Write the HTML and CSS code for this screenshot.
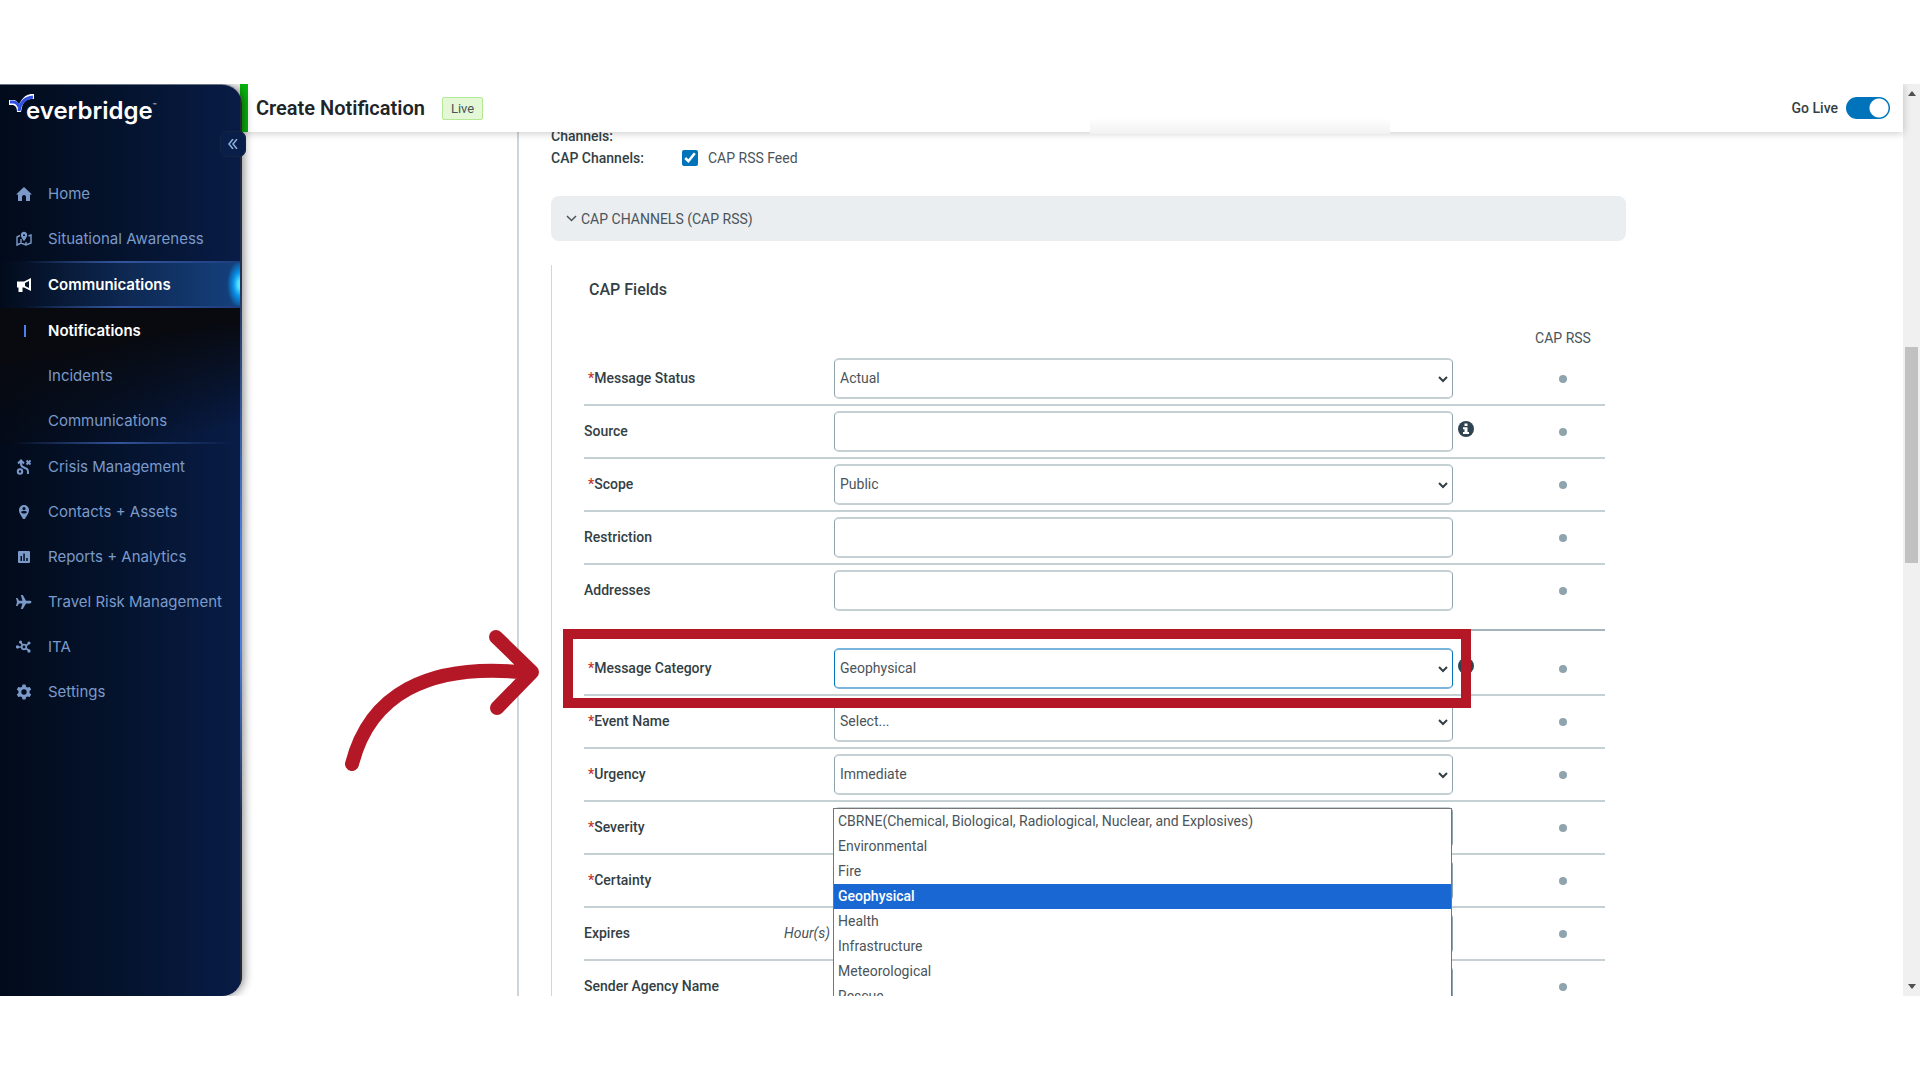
FILE: index.html
```html
<!DOCTYPE html>
<html lang="en">
<head>
<meta charset="utf-8">
<title>Create Notification</title>
<link rel="stylesheet" href="styles.css">
</head>
<body>
<div class="app">
  <aside class="sidebar">
    <div class="brand">
      <svg class="brand-mark" width="26" height="20" viewBox="0 0 26 20" aria-hidden="true">
        <path d="M0 6h4c3 0 5 2 6 5c2-6 6-10 12-11h3v5h-3c-5 0-8 4-9 8l-1 5h-4c0-5-2-7-5-7H0z" fill="#fff"/>
        <path d="M1 8h3c3 0 5 2 6 5" fill="none" stroke="#2f50e0" stroke-width="3"/>
        <path d="M10 17c1-8 5-13 14-14" fill="none" stroke="#2f50e0" stroke-width="3"/>
      </svg>
      <span class="brand-name">everbridge</span><span class="brand-tm">™</span>
    </div>
    <button class="collapse" type="button" aria-label="Collapse menu">
      <svg width="10" height="10" viewBox="0 0 10 10" fill="none" stroke="#8fb0e0" stroke-width="1.5"><path d="M5 0L1 5l4 5M9 0L5 5l4 5"/></svg>
    </button>
    <nav class="nav">
      <a class="nav-item" href="#"><svg width="16" height="16" viewBox="0 0 16 16" fill="currentColor"><path d="M8 1L0 8.500h2V15h4v-4a2 2 0 0 1 4 0v4h4V8.500h2z"/></svg>Home</a>
      <a class="nav-item" href="#"><svg width="16" height="16" viewBox="0 0 16 16" fill="none" stroke="currentColor" stroke-width="1.4"><path d="M4 4.500L1 6v8l4-2 5 2 5-2V4l-2.500 1M5 12V8M10 14v-3"/><path d="M8 1.500a2.500 2.500 0 0 1 2.500 2.500c0 2-2.500 5-2.500 5S5.500 6 5.500 4A2.500 2.500 0 0 1 8 1.500z" fill="currentColor"/><circle cx="8" cy="4.200" r="1" fill="#05122f" stroke="none"/></svg>Situational Awareness</a>
      <a class="nav-item nav-item--active" href="#"><svg width="16" height="16" viewBox="0 0 16 16" fill="currentColor"><path d="M1 4.500h7L15 1v13l-7-3.500H6.500V15h-4v-4.500H1zM13 4L9 6v3l4 2z" fill-rule="evenodd"/></svg>Communications</a>
      <div class="subnav">
        <a class="nav-item nav-item--current" href="#"><i class="marker"></i>Notifications</a>
        <a class="nav-item" href="#"><i></i>Incidents</a>
        <a class="nav-item" href="#"><i></i>Communications</a>
      </div>
      <a class="nav-item" href="#"><svg width="16" height="16" viewBox="0 0 16 16" fill="none" stroke="currentColor" stroke-width="2"><circle cx="4" cy="12.500" r="2.200"/><path d="M5 2v3c0 2 1 3 4 4s3 2 3 6M2 4.500l3-3 3 3M10.500 1.500l4 4M14.500 1.500l-4 4"/></svg>Crisis Management</a>
      <a class="nav-item" href="#"><svg width="16" height="16" viewBox="0 0 16 16" fill="currentColor"><path d="M8 1a5 5 0 0 1 5 5c0 4-3 6-4 9H7C6 12 3 10 3 6a5 5 0 0 1 5-5zm0 2a1.600 1.600 0 1 0 0 3.200A1.600 1.600 0 0 0 8 3zM5 8c1 2 5 2 6 0-1-1.300-5-1.300-6 0z" fill-rule="evenodd"/></svg>Contacts + Assets</a>
      <a class="nav-item" href="#"><svg width="16" height="16" viewBox="0 0 16 16" fill="currentColor"><path d="M3 2h10a1 1 0 0 1 1 1v10a1 1 0 0 1-1 1H3a1 1 0 0 1-1-1V3a1 1 0 0 1 1-1zm1.500 5v5H6V7zM7.300 4.500V12h1.500V4.500zM10.200 9v3h1.500V9z" fill-rule="evenodd"/></svg>Reports + Analytics</a>
      <a class="nav-item" href="#"><svg width="16" height="16" viewBox="0 0 16 16" fill="currentColor"><path d="M0 4h1.500L3 6.700h3.500L4.800 1h2L10 6.700h4a1.400 1.400 0 0 1 0 2.800h-4L6.800 15h-2l1.700-5.500H3L1.500 12H0l1-4z"/></svg>Travel Risk Management</a>
      <a class="nav-item" href="#"><svg width="16" height="16" viewBox="0 0 16 16" fill="none" stroke="currentColor" stroke-width="1.700"><circle cx="8" cy="8" r="2.300"/><path d="M2 8h3.500M6.500 6L4.500 3M10 7l3-3M10 9.500l3 2"/><circle cx="1.500" cy="8" r=".8"/><circle cx="4.500" cy="3" r=".7"/><circle cx="13" cy="4" r=".7"/><circle cx="13" cy="12" r=".8"/></svg>ITA</a>
      <a class="nav-item" href="#"><svg width="16" height="16" viewBox="0 0 16 16" fill="currentColor"><path d="M6.500 0h3l.5 2.300 1.400.8L13.700 2.400l1.500 2.600-1.700 1.600v1.800l1.700 1.600-1.500 2.600-2.300-.7-1.400.8-.5 2.300h-3L6 12.700l-1.400-.8-2.300.7L.8 10l1.700-1.600V6.600L.8 5l1.500-2.600 2.300.7L6 2.300zM8 4.800a2.700 2.700 0 1 0 0 5.400 2.700 2.700 0 0 0 0-5.400z" fill-rule="evenodd" transform="translate(0 .5)"/></svg>Settings</a>
    </nav>
  </aside>

  <main class="main">
    <header class="topbar">
      <h1 class="title">Create Notification</h1>
      <span class="badge">Live</span>
      <label class="go-live">Go Live <input class="switch" type="checkbox" role="switch" checked></label>
      <i class="topbar-shade"></i>
    </header>

    <div class="page">
      <form class="content">
        <div class="channels">
          <span class="channels-label">Channels:</span>
          <span class="channels-label">CAP Channels:</span>
          <label class="check"><input type="checkbox" checked>CAP RSS Feed</label>
        </div>

        <button class="accordion" type="button">
          <svg width="11" height="7" viewBox="0 0 11 7" fill="none" stroke="currentColor" stroke-width="1.500"><path d="M1 1l4.500 4.500L10 1"/></svg>CAP CHANNELS (CAP RSS)
        </button>

        <section class="fields">
          <h2 class="fields-title">CAP Fields</h2>
          <div class="fields-head"><span>CAP RSS</span></div>

          <div class="group">
            <div class="row">
              <label class="label label--required" for="status">Message Status</label>
              <div class="field"><select id="status"><option>Actual</option></select><svg class="caret" viewBox="0 0 10 7"><path d="M1 1l4 4 4-4"/></svg></div>
              <i class="dot"></i>
            </div>
            <div class="row">
              <label class="label" for="source">Source</label>
              <div class="field"><input id="source" type="text"></div>
              <svg class="info" viewBox="0 0 16 16"><circle cx="8" cy="8" r="8" fill="#2f4450"/><path d="M6.500 2.500h3V5h-3zM5 6.300h4.500V11H11v2H5v-2h1.500V8.300H5z" fill="#fff"/></svg>
              <i class="dot"></i>
            </div>
            <div class="row">
              <label class="label label--required" for="scope">Scope</label>
              <div class="field"><select id="scope"><option>Public</option></select><svg class="caret" viewBox="0 0 10 7"><path d="M1 1l4 4 4-4"/></svg></div>
              <i class="dot"></i>
            </div>
            <div class="row">
              <label class="label" for="restriction">Restriction</label>
              <div class="field"><input id="restriction" type="text"></div>
              <i class="dot"></i>
            </div>
            <div class="row">
              <label class="label" for="addresses">Addresses</label>
              <div class="field"><input id="addresses" type="text"></div>
              <i class="dot"></i>
            </div>
          </div>

          <div class="group group--next">
            <div class="row">
              <label class="label label--required" for="category">Message Category</label>
              <div class="field field--open"><select id="category"><option>Geophysical</option></select><svg class="caret" viewBox="0 0 10 7"><path d="M1 1l4 4 4-4"/></svg>
                <ul class="options" role="listbox" aria-label="Message Category">
                  <li role="option">CBRNE(Chemical, Biological, Radiological, Nuclear, and Explosives)</li>
                  <li role="option">Environmental</li>
                  <li role="option">Fire</li>
                  <li role="option" class="selected" aria-selected="true">Geophysical</li>
                  <li role="option">Health</li>
                  <li role="option">Infrastructure</li>
                  <li role="option">Meteorological</li>
                  <li role="option">Rescue</li>
                </ul>
              </div>
              <svg class="info" viewBox="0 0 16 16"><circle cx="8" cy="8" r="8" fill="#2f4450"/><path d="M6.500 2.500h3V5h-3zM5 6.300h4.500V11H11v2H5v-2h1.500V8.300H5z" fill="#fff"/></svg>
              <i class="dot"></i>
              <div class="callout">
                <svg class="arrow" width="200" height="150" viewBox="344 624 200 150" fill="none" stroke="#b41827" stroke-width="14" stroke-linecap="round" stroke-linejoin="round"><path d="M352 763C369 696 425 660 530 672M496 636L532 671L497 707"/></svg>
              </div>
            </div>
            <div class="row">
              <label class="label label--required" for="event">Event Name</label>
              <div class="field"><select id="event"><option>Select...</option></select><svg class="caret" viewBox="0 0 10 7"><path d="M1 1l4 4 4-4"/></svg></div>
              <i class="dot"></i>
            </div>
            <div class="row">
              <label class="label label--required" for="urgency">Urgency</label>
              <div class="field"><select id="urgency"><option>Immediate</option></select><svg class="caret" viewBox="0 0 10 7"><path d="M1 1l4 4 4-4"/></svg></div>
              <i class="dot"></i>
            </div>
            <div class="row">
              <label class="label label--required" for="severity">Severity</label>
              <div class="field"><select id="severity"></select></div>
              <i class="dot"></i>
            </div>
            <div class="row">
              <label class="label label--required" for="certainty">Certainty</label>
              <div class="field"><select id="certainty"></select></div>
              <i class="dot"></i>
            </div>
            <div class="row">
              <label class="label" for="expires">Expires <em>Hour(s)</em></label>
              <div class="field"><input id="expires" type="text"></div>
              <i class="dot"></i>
            </div>
            <div class="row">
              <label class="label" for="agency">Sender Agency Name</label>
              <div class="field"><input id="agency" type="text"></div>
              <i class="dot"></i>
            </div>
          </div>
        </section>
      </form>
    </div>
  </main>

  <div class="scrollbar" aria-hidden="true">
    <svg width="8" height="5" viewBox="0 0 8 5"><path d="M0 5l4-5 4 5z" fill="#505050"/></svg>
    <div class="track"><div class="thumb"></div></div>
    <svg width="8" height="5" viewBox="0 0 8 5"><path d="M0 0l4 5 4-5z" fill="#505050"/></svg>
  </div>
</div>
</body>
</html>
```
FILE: styles.css
```css
* { box-sizing: border-box; }

body {
  margin: 0;
  padding: 84px 0;
  background: #fff;
  color: #4a5459;
  font: 14px/20px Roboto, sans-serif;
}

.app {
  display: flex;
  height: calc(100vh - 168px);
  min-height: 640px;
  overflow: hidden;
}

/* Sidebar */
.sidebar {
  position: relative;
  z-index: 3;
  flex: none;
  width: 242px;
  margin-right: -2px;
  border-radius: 0 20px 20px 0;
  background:
    linear-gradient(#22262f, #22304f 20%, #4a7fe0 50%, #4a7fe0 62%, #22304f 80%, #22262f) right / 2px 100% no-repeat,
    linear-gradient(90deg, #020b1b, #04122b 45%, #081c46);
  border-top: 1px solid #6b7484;
  box-shadow: 2px 0 10px rgba(0, 0, 0, .45);
}

.brand {
  display: flex;
  height: 62px;
  padding: 9px 0 0 9px;
  color: #fff;
  font-family: Inter, sans-serif;
}
.brand-mark { margin-right: -9px; }
.brand-name { font-size: 24px; line-height: 34px; font-weight: 600; }
.brand-tm { padding-top: 2px; font-size: 6px; }

.collapse {
  position: absolute;
  top: 46px;
  right: -4px;
  display: grid;
  place-items: center;
  width: 26px;
  height: 26px;
  padding: 0;
  border: 1px solid #14233f;
  border-radius: 7px;
  background: #0a1e4a;
}

.nav { padding-top: 24px; margin-right: 2px; }
.nav-item {
  display: flex;
  align-items: center;
  gap: 16px;
  height: 45px;
  padding-left: 16px;
  color: #7b9aca;
  font: 15px/20px Inter, sans-serif;
  text-decoration: none;
}
.nav-item svg, .nav-item i { flex: none; width: 16px; height: 16px; }
.nav-item--active {
  height: 47px;
  border: solid transparent;
  border-width: 2px 0;
  background:
    linear-gradient(90deg, transparent 10%, #33549b 50%, #1d3f80) top / 100% 2px no-repeat border-box,
    linear-gradient(90deg, transparent 10%, #33549b 50%, #1d3f80) bottom / 100% 2px no-repeat border-box,
    radial-gradient(ellipse 13px 24px at 100% 50%, #58e4ff 15%, #0794ec 50%, transparent) border-box,
    linear-gradient(90deg, #020b1b, #0d2750 50%, #15417e) border-box;
  color: #fff;
  font-weight: 600;
}
.nav-item--current { color: #fff; font-weight: 600; }
.nav-item .marker {
  width: 2px;
  height: 12px;
  margin: 0 6px 0 8px;
  background: #4a80f0;
}
.subnav {
  padding-bottom: 1px;
  background:
    linear-gradient(90deg, transparent 5%, #33549b 50%, transparent 97%) bottom / 100% 2px no-repeat,
    linear-gradient(170deg, #080a10 30%, transparent 90%);
}

/* Main */
.main {
  display: flex;
  flex: 1;
  flex-direction: column;
  min-width: 0;
}
.topbar {
  position: relative;
  z-index: 2;
  display: flex;
  flex: none;
  align-items: center;
  height: 48px;
  padding: 0 13px 0 8px;
  border-left: 8px solid #08b30c;
  background: #fff;
  box-shadow: 0 1px 8px rgba(0, 0, 0, .22);
}
.title { margin: 0 17px 0 0; color: #1d2529; font-size: 20px; line-height: 24px; font-weight: 600; }
.badge {
  padding: 0 8px;
  border: 1px solid #b4e992;
  border-radius: 2px;
  background: #e4f8d8;
  font-size: 13px;
  line-height: 21px;
}
.go-live {
  display: flex;
  align-items: center;
  gap: 8px;
  margin-left: auto;
  color: #333f45;
  font-weight: 500;
}
.switch {
  appearance: none;
  width: 44px;
  height: 22px;
  margin: 0;
  border-radius: 11px;
  background: radial-gradient(circle at 33px 50%, #fff 9px, #0073bb 10px);
}
.topbar-shade {
  position: absolute;
  left: calc(50% + 14px);
  bottom: -2px;
  width: 300px;
  height: 16px;
  background: linear-gradient(#fff, #f1f1f1);
}

.page {
  flex: 1;
  min-height: 0;
  padding: 0 277px;
  overflow: hidden;
}
.content {
  padding-left: 32px;
  border-left: 2px solid #cdd6da;
}
.channels {
  display: grid;
  grid-template-columns: 131px 1fr;
  row-gap: 2px;
  margin-top: -6px;
}
.channels-label { grid-column: 1; color: #333f45; font-weight: 500; }
.check { display: flex; align-items: center; gap: 10px; }
.check input { width: 16px; height: 16px; margin: 0; accent-color: #0073bb; }

.accordion {
  display: flex;
  align-items: center;
  gap: 4px;
  width: 100%;
  height: 45px;
  margin: 28px 0 24px;
  padding: 0 15px;
  border: 0;
  border-radius: 8px;
  background: #eaeef1;
  color: #4a5459;
  font: 14px/20px Roboto, sans-serif;
}

.fields { padding: 13px 21px 0 32px; border-left: 1px solid #cdd6da; }
.fields-title { margin: 0 0 26px 5px; color: #333f45; font-size: 16px; line-height: 24px; font-weight: 500; }
.fields-head { display: flex; justify-content: flex-end; height: 25px; }
.fields-head span { width: 84px; text-align: center; }

.row {
  position: relative;
  display: grid;
  grid-template-columns: 250px 1fr 68px 84px;
  align-items: center;
  padding: 5px 0;
  border-bottom: 2px solid #c5d0d4;
}
.group .row:last-child { border-bottom: 0; }
.group--next {
  margin-top: 13px;
  padding-top: 12px;
  border-top: 2px solid #a5b4bb;
}
.label {
  display: flex;
  justify-content: space-between;
  padding: 0 4px 2px 0;
  color: #333f45;
  font-weight: 500;
}
.label em { color: #4a5459; font-weight: 400; }
.label--required { justify-content: flex-start; padding-left: 4px; }
.label--required::before { content: "*"; color: #c5362e; }

.field { position: relative; }
.field input, .field select {
  appearance: none;
  display: block;
  width: 100%;
  height: 41px;
  padding: 0 5px 2px;
  border: solid;
  border-width: 2px 1px;
  border-color: #c5d0d4 #8fa3ad;
  border-radius: 5px;
  background: #fff;
  color: #4a5459;
  font: inherit;
}
.field--open select { border-color: #79b5dd #0073bb; }
.caret {
  position: absolute;
  top: 18px;
  right: 5px;
  width: 10px;
  height: 7px;
  fill: none;
  stroke: #333f45;
  stroke-width: 2;
}
.info { width: 16px; height: 16px; margin: -5px 0 0 5px; }
.dot {
  grid-column: 4;
  justify-self: center;
  width: 8px;
  height: 8px;
  border-radius: 50%;
  background: #90a4ae;
}

/* Open option list */
.options {
  position: absolute;
  z-index: 1;
  top: 160px;
  left: -1px;
  right: 1px;
  margin: 0;
  padding: 0;
  border: 1px solid #767676;
  background: #fff;
  list-style: none;
}
.options li { padding: 0 4px; line-height: 25px; }
.options .selected { background: #1967d2; color: #fff; font-weight: 500; }

/* Tutorial highlight */
.callout {
  position: absolute;
  z-index: 2;
  inset: -14px 134px -14px -21px;
  border: 10px solid #b41827;
}
.arrow { position: absolute; top: -14px; left: -229px; }

.scrollbar {
  display: flex;
  flex: none;
  flex-direction: column;
  align-items: center;
  justify-content: space-between;
  width: 17px;
  padding: 7px 0;
  background: #f0f0f0;
}
.track { flex: 1; width: 13px; padding-top: 251px; }
.thumb { height: 216px; background: #c1c1c1; }
```
